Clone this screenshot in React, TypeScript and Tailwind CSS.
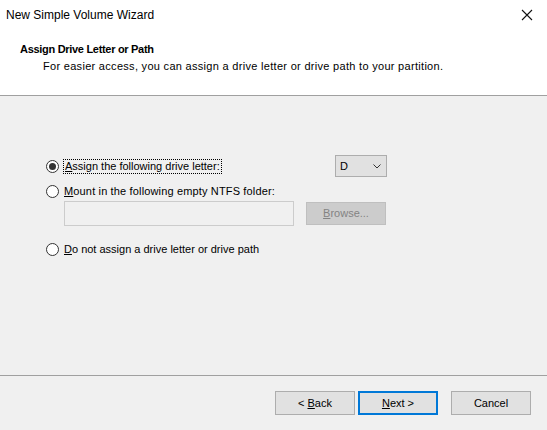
import React from "react";

function Radio({ checked }: { checked?: boolean }) {
  return (
    <span className="flex h-[13px] w-[13px] shrink-0 items-center justify-center rounded-full border border-[#333333] bg-white">
      {checked && <span className="h-[7px] w-[7px] rounded-full bg-[#333333]" />}
    </span>
  );
}

function WinButton({
  children,
  primary,
}: {
  children: React.ReactNode;
  primary?: boolean;
}) {
  return (
    <button
      type="button"
      className={[
        "flex h-[24px] w-[80px] items-center justify-center bg-[#e1e1e1] text-[11px] text-black",
        primary ? "border-2 border-[#0078d7]" : "border border-[#adadad]",
      ].join(" ")}
    >
      {children}
    </button>
  );
}

export default function App() {
  return (
    <div
      className="flex h-[430px] w-[547px] flex-col overflow-hidden bg-white text-black"
      style={{ fontFamily: '"Liberation Sans", Arial, sans-serif' }}
    >
      {/* title bar */}
      <div className="flex h-[30px] shrink-0 items-center justify-between pl-[6px] pr-[14px]">
        <span className="text-[12px]">New Simple Volume Wizard</span>
        <svg viewBox="0 0 12 12" className="h-[12px] w-[12px]" aria-hidden="true">
          <path d="M1 1 11 11M11 1 1 11" stroke="#111" strokeWidth="1.1" fill="none" />
        </svg>
      </div>

      {/* header */}
      <div className="flex h-[66px] shrink-0 flex-col border-b border-[#a0a0a0] pt-[12px]">
        <div className="pl-[20px] text-[11px] font-bold leading-[14px] tracking-[-0.3px]">
          Assign Drive Letter or Path
        </div>
        <div className="mt-[3px] pl-[43px] text-[11px] leading-[14px] tracking-[0.3px]">
          For easier access, you can assign a drive letter or drive path to your partition.
        </div>
      </div>

      {/* body */}
      <div className="flex flex-1 flex-col bg-[#f0f0f0]">
        <div className="flex h-[280px] flex-col border-b border-[#a0a0a0] pl-[46px] pt-[59px]">
          <div className="flex h-[22px] w-[341px] items-center justify-between">
            <label className="flex items-center gap-[4px] text-[11px]">
              <Radio checked />
              <span className="border border-dotted border-black px-[1px] leading-[13px]">
                <span className="underline">A</span>ssign the following drive letter:
              </span>
            </label>
            <div className="flex h-[22px] w-[52px] items-center justify-between border border-[#adadad] bg-[#e1e1e1] pl-[4px] pr-[5px] text-[11px]">
              <span>D</span>
              <svg viewBox="0 0 8 5" className="h-[5px] w-[8px]" aria-hidden="true">
                <path d="M0.5 0.5 4 4 7.5 0.5" stroke="#333" strokeWidth="1" fill="none" />
              </svg>
            </div>
          </div>

          <label className="mt-[7px] flex h-[14px] items-center gap-[5px] text-[11px] tracking-[0.15px]">
            <Radio />
            <span>
              <span className="underline">M</span>ount in the following empty NTFS folder:
            </span>
          </label>

          <div className="mt-[3px] flex items-center gap-[12px] pl-[18px]">
            <div className="h-[25px] w-[230px] border border-[#cccccc]" />
            <div className="flex h-[23px] w-[80px] items-center justify-center border border-[#bfbfbf] bg-[#cccccc] text-[11px] text-[#838383]">
              <span>
                <span className="underline">B</span>rowse...
              </span>
            </div>
          </div>

          <label className="mt-[16px] flex h-[14px] items-center gap-[5px] text-[11px]">
            <Radio />
            <span>
              <span className="underline">D</span>o not assign a drive letter or drive path
            </span>
          </label>
        </div>

        {/* footer */}
        <div className="flex items-center pl-[275px] pt-[15px]">
          <WinButton>
            &lt; <span className="ml-[3px] underline">B</span>ack
          </WinButton>
          <div className="ml-[3px]">
            <WinButton primary>
              <span className="underline">N</span>ext &gt;
            </WinButton>
          </div>
          <div className="ml-[13px]">
            <WinButton>Cancel</WinButton>
          </div>
        </div>
      </div>
    </div>
  );
}
